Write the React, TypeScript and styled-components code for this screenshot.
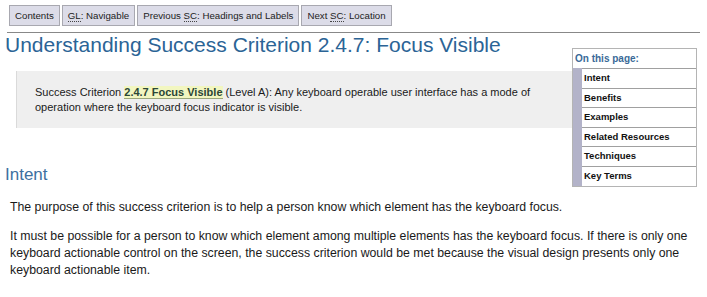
import React from "react";
import styled, { createGlobalStyle } from "styled-components";

const SANS = '"Liberation Sans", Arial, sans-serif';

const Global = createGlobalStyle`
  html, body { margin: 0; padding: 0; background: #fff; }
  body { font-family: ${SANS}; color: #000; }
  * { box-sizing: border-box; }
`;

const Page = styled.div`
  width: 707px;
  height: 297px;
  overflow: hidden;
  padding: 5px 7px 0 5px;
`;

const Nav = styled.nav`
  display: flex;
  gap: 2px;
  margin-left: 4px;
`;

const NavButton = styled.a`
  display: block;
  height: 21px;
  padding: 0 5px;
  border: 1px solid #a8a8b0;
  background: #dcdce8;
  color: #222;
  font-family: ${SANS};
  font-size: 9.7px;
  line-height: 19px;
  text-decoration: none;
  white-space: nowrap;
`;

const Abbr = styled.span`
  border-bottom: 1px dotted #444;
`;

const Rule = styled.hr`
  margin: 6px 0 0 2px;
  border: 0;
  border-top: 1px solid #888;
  height: 0;
`;

const Title = styled.h1`
  margin: 0;
  font-family: ${SANS};
  font-weight: normal;
  font-size: 21px;
  line-height: 24px;
  color: #2b6496;
`;

const Content = styled.div`
  display: flow-root;
`;

const Sidebar = styled.aside`
  float: right;
  width: 125px;
  margin: -9px 3px 0 0;
  border: 1px solid #b4b4b4;
  background: #fff;
`;

const SidebarHead = styled.div`
  height: 19px;
  padding-left: 2px;
  font-family: ${SANS};
  font-weight: bold;
  font-size: 10px;
  line-height: 19px;
  color: #3a6a98;
`;

const SidebarList = styled.ul`
  list-style: none;
  margin: 0;
  padding: 0;
  border-left: 9px solid #b3b3c9;
`;

const SidebarItem = styled.li`
  height: 19.6px;
  padding-left: 2px;
  border-top: 1px solid #a0a0a0;
  font-family: ${SANS};
  font-weight: bold;
  font-size: 9.5px;
  line-height: 18px;
  color: #111;
`;

const Summary = styled.div`
  overflow: hidden;
  margin: 14px 0 0 11px;
  padding: 14px 18px 13px 18px;
  background: #efefef;
  border-left: 1px solid #dadada;
  font-family: ${SANS};
  font-size: 11px;
  line-height: 15px;
  color: #1a1a1a;
`;

const Highlight = styled.strong`
  background: #f2f6c0;
  color: #2b4636;
  border-bottom: 1px solid #9aa77a;
`;

const Heading = styled.h2`
  margin: 37px 0 0 0;
  font-family: ${SANS};
  font-weight: normal;
  font-size: 17px;
  line-height: 20px;
  color: #3d70a0;
`;

const Para = styled.p`
  margin: 14px 0 0 5px;
  font-family: ${SANS};
  font-size: 12.3px;
  line-height: 17px;
  color: #1a1a1a;
  & + & { margin-top: 12px; }
`;

const toc = ["Intent", "Benefits", "Examples", "Related Resources", "Techniques", "Key Terms"];

export default function App() {
  return (
    <Page>
      <Global />
      <Nav>
        <NavButton href="#">Contents</NavButton>
        <NavButton href="#"><Abbr>GL</Abbr>: Navigable</NavButton>
        <NavButton href="#">Previous <Abbr>SC</Abbr>: Headings and Labels</NavButton>
        <NavButton href="#">Next <Abbr>SC</Abbr>: Location</NavButton>
      </Nav>
      <Rule />
      <Title>Understanding Success Criterion 2.4.7: Focus Visible</Title>
      <Content>
        <Sidebar>
          <SidebarHead>On this page:</SidebarHead>
          <SidebarList>
            {toc.map((t) => (
              <SidebarItem key={t}>{t}</SidebarItem>
            ))}
          </SidebarList>
        </Sidebar>
        <Summary>
          Success Criterion <Highlight>2.4.7 Focus Visible</Highlight> (Level A): Any keyboard operable user
          interface has a mode of operation where the keyboard focus indicator is visible.
        </Summary>
        <Heading>Intent</Heading>
        <Para>
          The purpose of this success criterion is to help a person know which element has the keyboard focus.
        </Para>
        <Para>
          It must be possible for a person to know which element among multiple elements has the keyboard focus. If
          there is only one keyboard actionable control on the screen, the success criterion would be met because the
          visual design presents only one keyboard actionable item.
        </Para>
      </Content>
    </Page>
  );
}
